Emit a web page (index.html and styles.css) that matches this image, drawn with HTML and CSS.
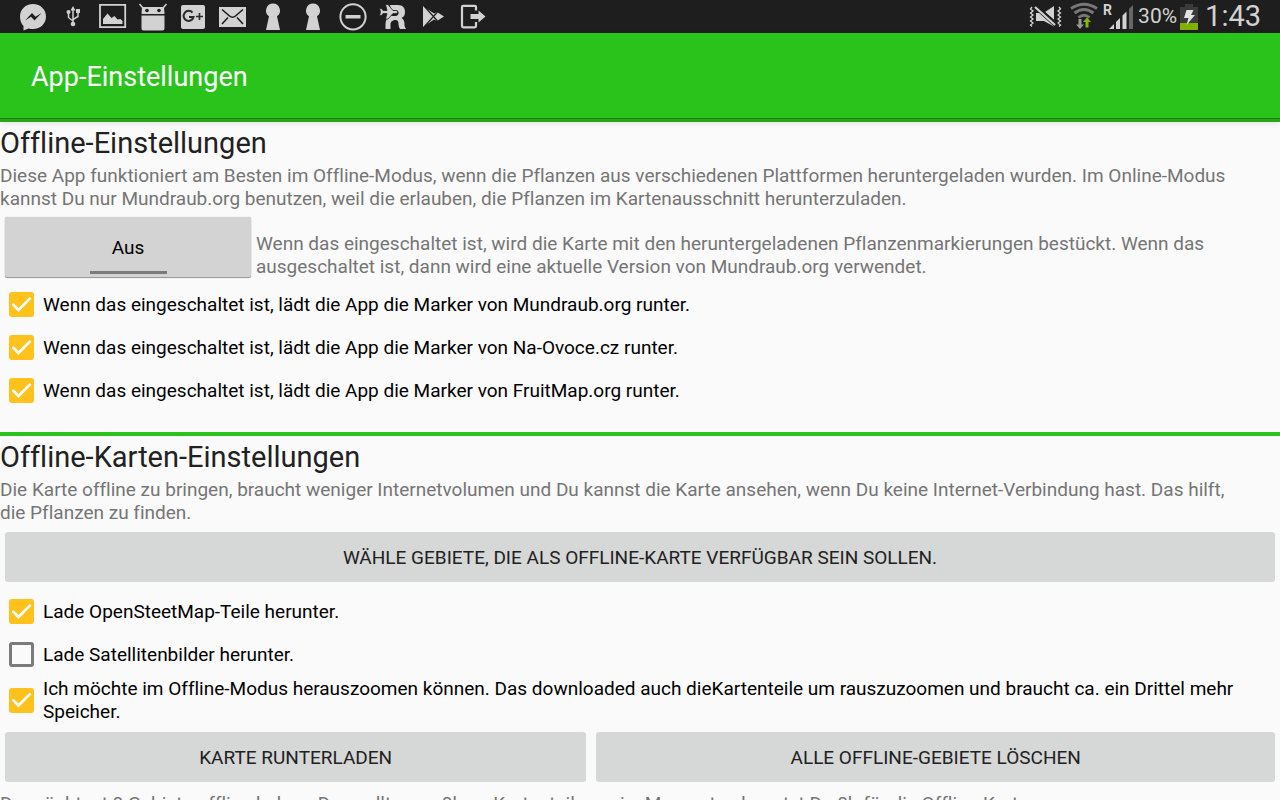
FILE: index.html
```html
<!DOCTYPE html>
<html lang="de">
<head>
<meta charset="utf-8">
<meta name="viewport" content="width=device-width, initial-scale=1">
<title>App-Einstellungen</title>
<link rel="stylesheet" href="styles.css">
</head>
<body>
<div class="statusbar">
  <div class="notifications">
    <svg class="icon" viewBox="0 0 40 33" aria-hidden="true"><path fill="#d2d2d2" d="M20 4c7.500 0 13 5.500 13 12.500S27.500 29 20 29c-1.500 0-3-.2-4.400-.6L10.500 30.500v-4.600C8 23.500 7 20 7 16.500 7 9.500 12.500 4 20 4z"/><path fill="#1e1e1e" d="M12 20.500l7-7.500 3.500 3.700 6-3.700-7 7.500-3.500-3.700z"/></svg>
    <svg class="icon" viewBox="0 0 40 33" aria-hidden="true"><g fill="none" stroke="#cfcfcf" stroke-width="1.500"><path d="M20 9v14M15.500 13v4.500L20 21M25 12v4.500L20 19.500"/></g><g fill="#cfcfcf"><path d="M20 6l2.500 4.500h-5zM23 9h4v4h-4z"/><circle cx="15.500" cy="12" r="2"/><circle cx="20" cy="24" r="2.300"/></g></svg>
    <svg class="icon" viewBox="0 0 40 33" aria-hidden="true"><path fill="none" stroke="#d2d2d2" stroke-width="1.800" d="M7 4.800h25.200v22.400H7z"/><path fill="#d2d2d2" d="M10 24v-5l4.500-5.500 4 4.500 3-2 3 3.500 3-.5 2 2v3z"/></svg>
    <svg class="icon" viewBox="0 0 40 33" aria-hidden="true"><path fill="#d2d2d2" d="M9 7h22l.5 7h-23zM8.500 15.500h23v13q0 2-2 2h-19q-2 0-2-2z"/><path stroke="#d2d2d2" stroke-width="1.500" fill="none" d="M10 8L6.500 4M30 8l3.500-4"/><circle cx="14" cy="10.500" r="1.800" fill="#1e1e1e"/><circle cx="26" cy="10.500" r="1.800" fill="#1e1e1e"/></svg>
    <svg class="icon" viewBox="0 0 40 33" aria-hidden="true"><rect x="8" y="5" width="24" height="24" rx="2" fill="#d2d2d2"/><path fill="none" stroke="#2a2a2a" stroke-width="2" d="M19.500 12.700a5 5 0 1 0 1 4.300H16"/><path stroke="#2a2a2a" stroke-width="1.600" d="M23 16.500h7M26.500 13v7"/></svg>
    <svg class="icon" viewBox="0 0 40 33" aria-hidden="true"><path fill="#d2d2d2" d="M6 7h27v20H6z"/><path fill="none" stroke="#1e1e1e" stroke-width="1.600" d="M9 9.500l7.500 6.500q3 2.500 6 0L30 9.500M9 24l6-6.500M30 24l-6-6.500"/></svg>
    <svg class="icon" viewBox="0 0 40 33" aria-hidden="true"><path fill="#d2d2d2" d="M20 3.500a7 7 0 0 1 4 12.700L27 30H13l3-13.800a7 7 0 0 1 4-12.700z"/></svg>
    <svg class="icon" viewBox="0 0 40 33" aria-hidden="true"><path fill="#d2d2d2" d="M20 3.500a7 7 0 0 1 4 12.700L27 30H13l3-13.800a7 7 0 0 1 4-12.700z"/></svg>
    <svg class="icon" viewBox="0 0 40 33" aria-hidden="true"><circle cx="20" cy="16.800" r="12.600" fill="none" stroke="#d2d2d2" stroke-width="2"/><path fill="#d2d2d2" d="M12.500 15h15v3.500h-15z"/></svg>
    <svg class="icon" viewBox="0 0 40 33" aria-hidden="true"><path fill="#d2d2d2" d="M17 5h8c5 0 7 3 7 7 0 3-1 5-3.500 6 2 1 3 3 3 6v2l1.500 3h-6q-1.500-2-1.500-5c0-3-1-4-3-4h-1q-4 1-4 4v5h-5v-5q0-6 5-8h5c4 0 4.500-6 0-6h-5z"/><path fill="#d2d2d2" stroke="#1e1e1e" stroke-width=".8" d="M6.500 8.500h2l1.500 2h4L12.500 4.500h2.500l5 6h3.500q2.500 1.500 0 3H20l-5 5.500h-2.500l1.500-5.500h-4l-1.500 2h-2l1-3.500z"/></svg>
    <svg class="icon" viewBox="0 0 40 33" aria-hidden="true"><path fill="#d2d2d2" d="M10 6l11 7.500 3-1.500 7 4.500-7 4.500-3-1.500L10 27z"/><path fill="none" stroke="#1e1e1e" stroke-width="1.200" d="M11 6l13.500 15M11 27l13.500-15"/></svg>
    <svg class="icon" viewBox="0 0 40 33" aria-hidden="true"><path fill="none" stroke="#d2d2d2" stroke-width="2.200" d="M23 10.500V7q0-1.200-1.200-1.200H10.300Q9 5.800 9 7v19q0 1.300 1.300 1.300h11.500q1.200 0 1.200-1.300v-4"/><path fill="#d2d2d2" d="M17.500 14h8v-3.500l7 6-7 6V19h-8z"/></svg>
  </div>
  <div class="system">
    <svg class="icon-mute" viewBox="0 0 33 33" aria-hidden="true"><g fill="none" stroke="#d2d2d2" stroke-width="1.300"><path d="M3 7l-1.500 2L4 11l-2.500 2L4 15l-2.500 2L4 19l-2.500 2L4 23l-2.500 2L3 26.500M30 7l1.500 2L29 11l2.500 2L29 15l2.500 2L29 19l2.500 2L29 23l2.500 2L30 26.500"/></g><path fill="#d2d2d2" d="M7 13h6l12 11v2.500L15 21H7zM16 12l9-6v14z"/><path stroke="#1e1e1e" stroke-width="5" d="M7 7l20 18"/><path stroke="#d2d2d2" stroke-width="2.200" d="M6 7l20 18"/></svg>
    <svg class="icon-wifi" viewBox="0 0 28 33" aria-hidden="true"><g fill="none" stroke="#777" stroke-width="2.800"><path d="M1 8.500Q14 0 27 8.500M4.500 13q9.500-7 19 0M8.500 17.500q5.500-4.500 11 0"/></g><path fill="#999" d="M8.500 19h3v5.500H14l-4 4.500-4-4.500h2.500z"/><path fill="#85b80b" d="M15.500 27.500h3V22H21l-4-4.500-4 4.500h2.500z"/></svg>
    <svg class="icon-signal" viewBox="0 0 32 33" role="img" aria-label="Roaming"><text class="roaming" x="1" y="15">R</text><path fill="#d2d2d2" d="M7 29l5-5v5zM14 22l4-4v11h-4zM20.500 15.500l4-4V29h-4z"/><path fill="#666" d="M27 9l4-4v24h-4z"/></svg>
    <span class="percent">30%</span>
    <svg class="icon-battery" viewBox="0 0 18 33" aria-hidden="true"><path fill="#3b3b3b" d="M5 4h8v3h5v23H0V7h5z"/><path fill="#80b000" d="M0 23h18v7H0z"/><path fill="#e2e2e2" d="M6.500 10h7L11 15h4L6.500 25l2-7H4z"/></svg>
    <time class="clock">1:43</time>
  </div>
</div>
<header class="appbar"><h1 class="title">App-Einstellungen</h1></header>
<main class="settings">
  <section class="section">
    <h2 class="heading">Offline-Einstellungen</h2>
    <p class="text">Diese App funktioniert am Besten im Offline-Modus, wenn die Pflanzen aus verschiedenen Plattformen heruntergeladen wurden. Im Online-Modus kannst Du nur Mundraub.org benutzen, weil die erlauben, die Pflanzen im Kartenausschnitt herunterzuladen.</p>
    <div class="mode">
      <button class="toggle" type="button" aria-pressed="false" aria-describedby="mode-text"><span class="toggle-label">Aus</span></button>
      <p class="text mode-text" id="mode-text">Wenn das eingeschaltet ist, wird die Karte mit den heruntergeladenen Pflanzenmarkierungen bestückt. Wenn das ausgeschaltet ist, dann wird eine aktuelle Version von Mundraub.org verwendet.</p>
    </div>
    <div class="options">
      <label class="option"><input class="box" type="checkbox" checked><span>Wenn das eingeschaltet ist, lädt die App die Marker von Mundraub.org runter.</span></label>
      <label class="option"><input class="box" type="checkbox" checked><span>Wenn das eingeschaltet ist, lädt die App die Marker von Na-Ovoce.cz runter.</span></label>
      <label class="option"><input class="box" type="checkbox" checked><span>Wenn das eingeschaltet ist, lädt die App die Marker von FruitMap.org runter.</span></label>
    </div>
  </section>
  <section class="section">
    <h2 class="heading">Offline-Karten-Einstellungen</h2>
    <p class="text">Die Karte offline zu bringen, braucht weniger Internetvolumen und Du kannst die Karte ansehen, wenn Du keine Internet-Verbindung hast. Das hilft, die Pflanzen zu finden.</p>
    <div class="actions"><button class="button" type="button">WÄHLE GEBIETE, DIE ALS OFFLINE-KARTE VERFÜGBAR SEIN SOLLEN.</button></div>
    <div class="options">
      <label class="option"><input class="box" type="checkbox" checked><span>Lade OpenSteetMap-Teile herunter.</span></label>
      <label class="option"><input class="box" type="checkbox"><span>Lade Satellitenbilder herunter.</span></label>
      <label class="option"><input class="box" type="checkbox" checked><span>Ich möchte im Offline-Modus herauszoomen können. Das downloaded auch dieKartenteile um rauszuzoomen und braucht ca. ein Drittel mehr Speicher.</span></label>
    </div>
    <div class="actions"><button class="button" type="button">KARTE RUNTERLADEN</button><button class="button" type="button">ALLE OFFLINE-GEBIETE LÖSCHEN</button></div>
    <p class="text summary">Du möchtest 0 Gebiete offline haben. Das sollten so 0b an Kartenteilen sein. Momentan benutzt Du 0b für die Offline-Karte.</p>
  </section>
</main>
</body>
</html>
```
FILE: styles.css
```css
* { box-sizing: border-box; }
body {
  margin: 0;
  height: 100vh;
  display: flex;
  flex-direction: column;
  background: #fafafa;
  color: #000;
  font: 19px/23px Roboto, sans-serif;
  font-variant-ligatures: none;
}
h1, h2, p { margin: 0; font-weight: 400; }
svg { display: block; flex: none; }

.statusbar {
  flex: none;
  height: 33px;
  display: flex;
  justify-content: space-between;
  padding: 0 19px 0 13px;
  background: #1e1e1e;
  color: #d2d2d2;
}
.notifications, .system { display: flex; align-items: center; }
.icon { width: 40px; height: 33px; }
.icon-mute { width: 33px; height: 33px; margin-right: 8px; }
.icon-wifi { width: 28px; height: 33px; margin-right: 4px; }
.icon-signal { width: 32px; height: 33px; margin-right: 4px; }
.roaming { font: 700 14px Roboto, sans-serif; fill: #d2d2d2; }
.percent { font-size: 21px; line-height: 33px; margin-right: 3px; }
.icon-battery { width: 18px; height: 33px; margin-right: 7px; }
.clock { font-size: 29px; line-height: 33px; }

.appbar {
  flex: none;
  height: 89px;
  display: flex;
  align-items: center;
  padding: 1px 31px 0;
  background: #29c31b;
  border-bottom: 3px solid #24a818;
  box-shadow: inset 0 -1px #1c7b13, 0 1px 6px rgba(0, 0, 0, .12);
  color: #fff;
}
.title { font-size: 27px; line-height: 32px; }

.settings { flex: 1; min-height: 0; overflow-y: auto; scrollbar-width: none; }
.section { padding-bottom: 20px; }
.section + .section { border-top: 4px solid #29c31b; }
.heading { padding: 4px 0; font-size: 29px; line-height: 34px; color: #212121; }
.text { padding-right: 32px; color: #757575; }
.summary { padding-top: 2px; }

.mode { display: flex; gap: 5px; padding: 7px 5px 5px; }
.toggle {
  flex: none;
  width: 246px;
  height: 60px;
  padding: 0;
  border: 0;
  border-radius: 2px;
  background: #d3d3d3;
  box-shadow: 0 1px 1px rgba(0, 0, 0, .4), 0 0 1px rgba(0, 0, 0, .3);
  font: inherit;
  color: #000;
}
.toggle-label {
  display: block;
  width: 77px;
  margin: 0 auto;
  padding: 16px 0 12px;
  border-bottom: 3px solid #7b7b7b;
}
.mode-text { padding-top: 15px; padding-right: 0; }

.option {
  display: flex;
  align-items: center;
  gap: 9px;
  min-height: 43px;
  padding: 1px 9px;
}
.box {
  appearance: none;
  flex: none;
  width: 25px;
  height: 25px;
  margin: 0;
  border: 3px solid #7b7b7b;
  border-radius: 3px;
  display: grid;
  place-items: center;
}
.box:checked { border: 0; background: #ffc11c; }
.box:checked::before {
  content: "";
  width: 20px;
  height: 15px;
  background: #fff;
  clip-path: polygon(0 52%, 9% 40%, 35% 73%, 91% 0, 100% 12%, 35% 100%);
}

.actions { display: flex; gap: 10px; padding: 8px 5px; }
.button {
  flex: 1 1 auto;
  height: 50px;
  padding: 0;
  border: 0;
  border-radius: 3px;
  background: #d6d7d7;
  font: inherit;
  color: #212121;
}
```
